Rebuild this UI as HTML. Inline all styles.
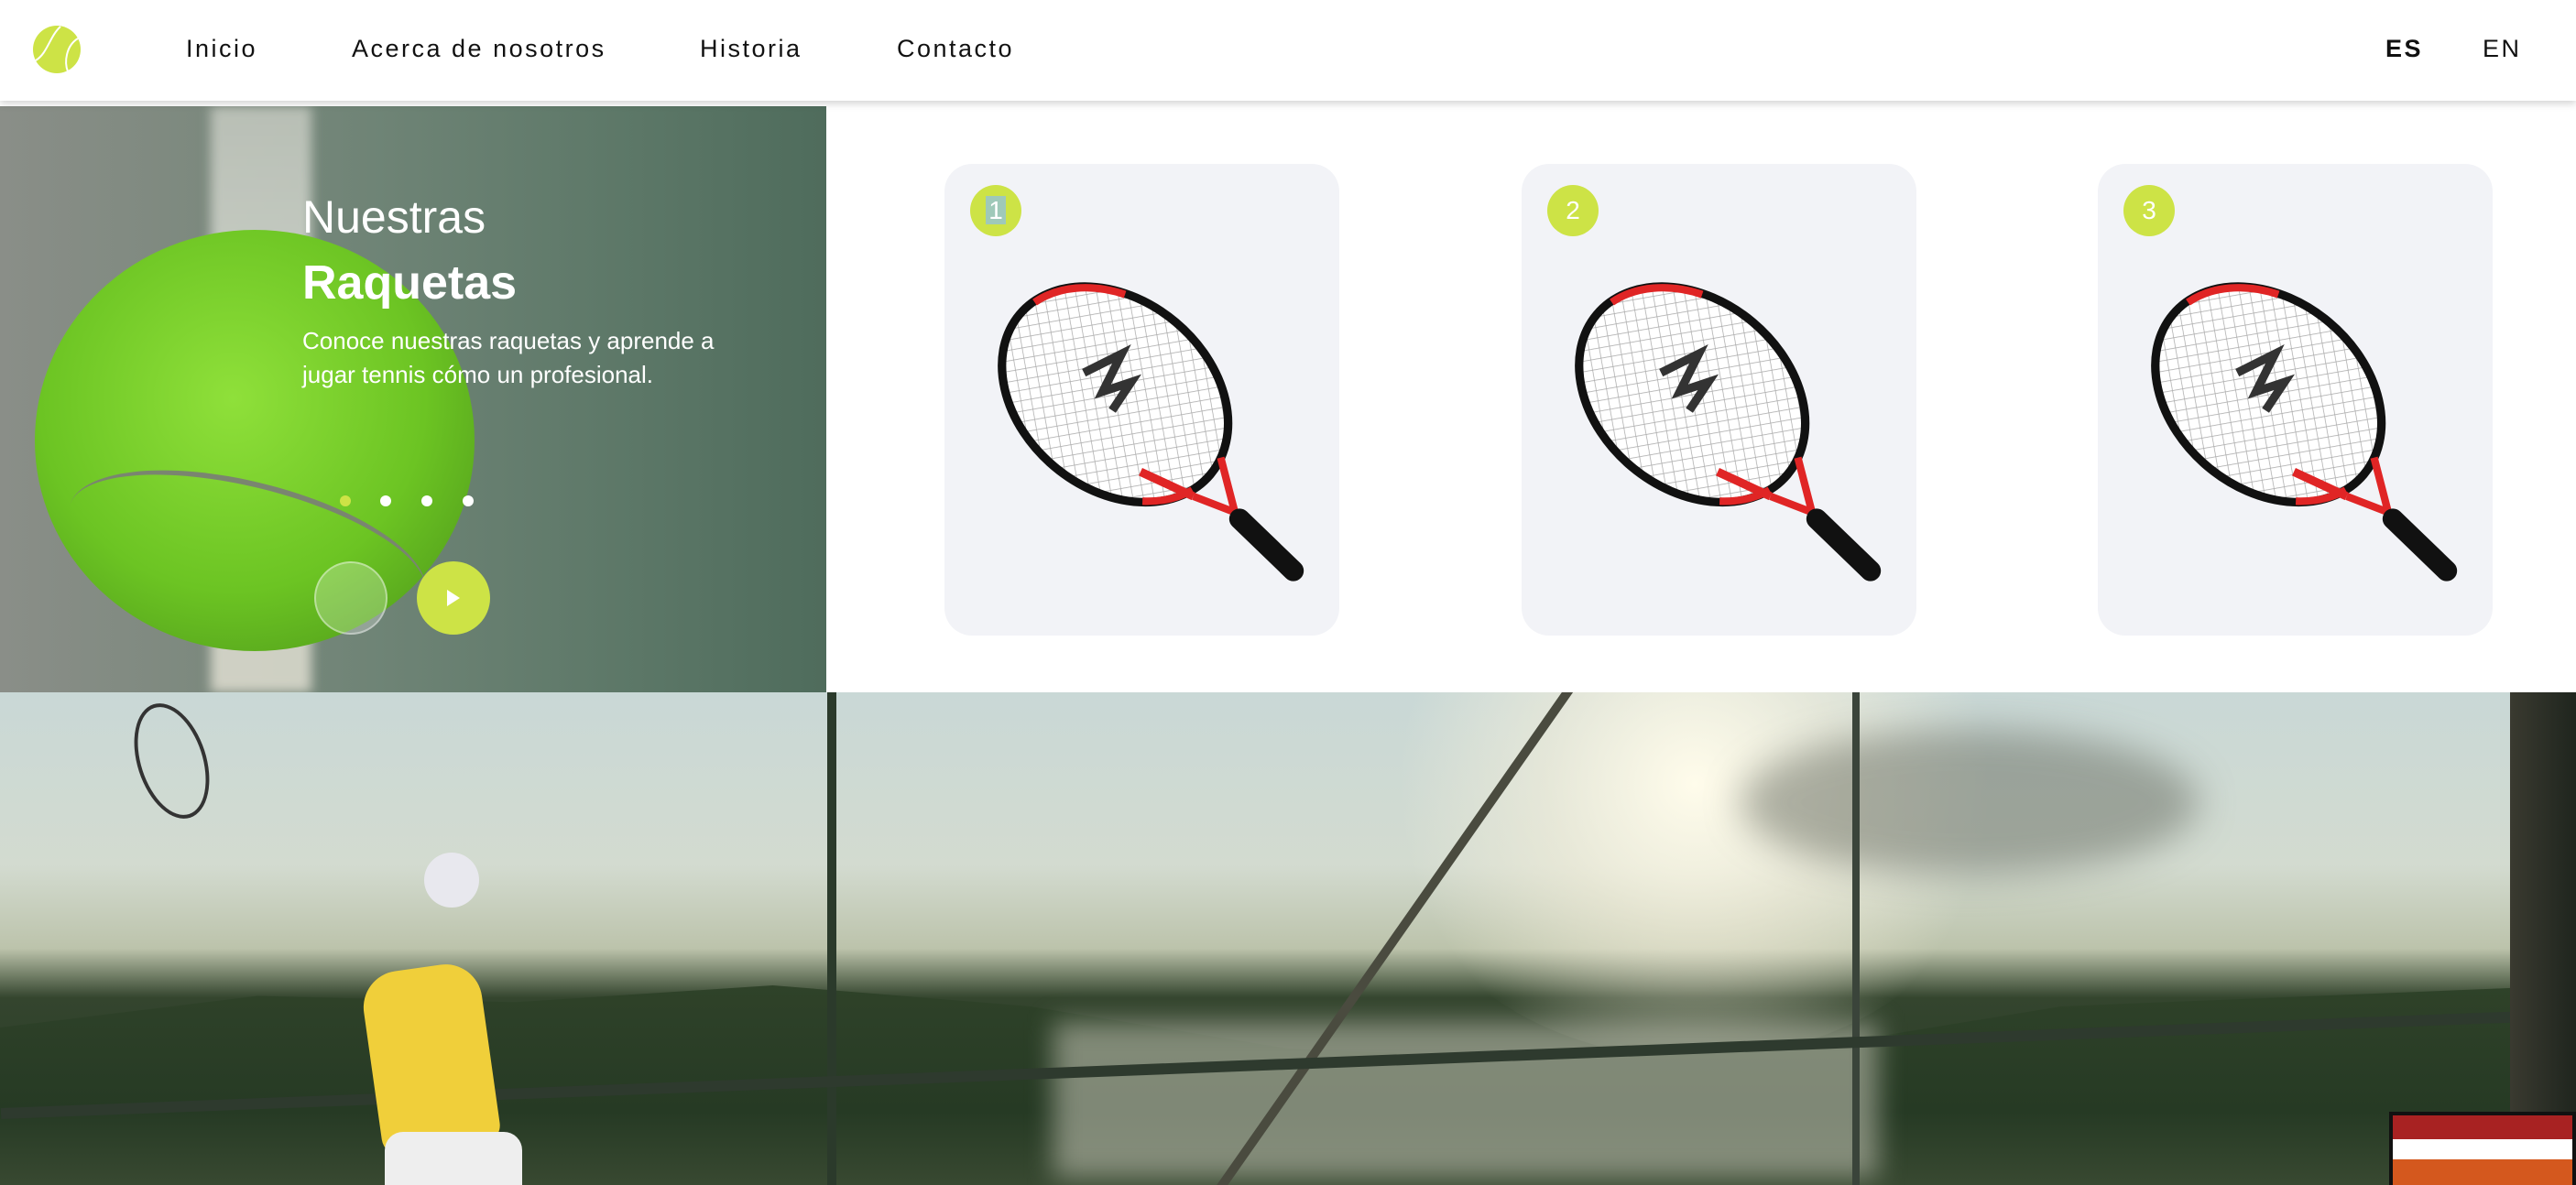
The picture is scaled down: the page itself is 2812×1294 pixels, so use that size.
<!DOCTYPE html>
<html><head><meta charset="utf-8">
<style>
*{margin:0;padding:0;box-sizing:border-box}
html,body{width:2812px;height:1294px;overflow:hidden;background:#fff;font-family:"Liberation Sans",Arial,sans-serif}
.nav{position:absolute;left:0;top:0;width:2812px;height:110px;background:#fff;box-shadow:0 3px 8px rgba(0,0,0,.18);z-index:5}
.nav a{position:absolute;top:38px;font-size:27px;letter-spacing:2.5px;color:#111;text-decoration:none}
.hero{position:absolute;left:0;top:116px;width:902px;height:640px;overflow:hidden;
background:linear-gradient(90deg,#8a8e88 0%,#7f8a80 20%,#6f8476 45%,#5d7868 75%,#4f6c5c 100%)}
.card{position:absolute;top:179px;width:431px;height:515px;background:#f2f3f7;border-radius:30px}
.badge{position:absolute;left:28px;top:23px;width:56px;height:56px;border-radius:50%;background:#cde346;color:#fff;font-size:28px;text-align:center;line-height:56px;z-index:2}
.bottom{position:absolute;left:0;top:756px;width:2812px;height:538px;overflow:hidden;
background:linear-gradient(180deg,#c9d8d6 0%,#d3dbd0 35%,#bcc3ab 52%,#34452e 62%,#2d3f2a 80%,#3a4a30 100%)}
</style></head><body>
<div class="nav">
<svg style="position:absolute;left:36px;top:28px" width="52" height="52" viewBox="0 0 52 52"><circle cx="26" cy="26" r="26" fill="#cde346"/><path d="M30 1 C18 12 16 30 3 38" stroke="#fff" stroke-width="2" fill="none"/><path d="M49 14 C36 22 34 40 38 50" stroke="#fff" stroke-width="2" fill="none"/></svg>
<a style="left:203px">Inicio</a>
<a style="left:384px">Acerca de nosotros</a>
<a style="left:764px">Historia</a>
<a style="left:979px">Contacto</a>
<a style="left:2604px;font-weight:bold">ES</a>
<a style="left:2710px">EN</a>
</div>

<div class="hero">
<div style="position:absolute;left:230px;top:0;width:110px;height:640px;background:linear-gradient(180deg,#c9cdc4,#dfe2da 40%,#e6e3d6);opacity:.8;filter:blur(6px)"></div>
<div style="position:absolute;left:38px;top:135px;width:480px;height:460px;border-radius:50%;background:radial-gradient(circle at 45% 40%,#8fe03a,#6cc423 55%,#4f9a1a 90%);"></div>
<div style="position:absolute;left:70px;top:410px;width:400px;height:150px;border-top:6px solid #7a8570;border-radius:50%;transform:rotate(14deg)"></div>
<div style="position:absolute;left:330px;top:92px;color:#fff;font-size:50px">Nuestras</div>
<div style="position:absolute;left:330px;top:163px;color:#fff;font-size:52px;font-weight:bold">Raquetas</div>
<div style="position:absolute;left:330px;top:238px;color:#fff;font-size:26px;line-height:37px;width:460px">Conoce nuestras raquetas y aprende a jugar tennis cómo un profesional.</div>
<div style="position:absolute;left:371px;top:425px;width:12px;height:12px;border-radius:50%;background:#cde346"></div>
<div style="position:absolute;left:415px;top:425px;width:12px;height:12px;border-radius:50%;background:#fff"></div>
<div style="position:absolute;left:460px;top:425px;width:12px;height:12px;border-radius:50%;background:#fff"></div>
<div style="position:absolute;left:505px;top:425px;width:12px;height:12px;border-radius:50%;background:#fff"></div>
<div style="position:absolute;left:343px;top:497px;width:80px;height:80px;border-radius:50%;background:rgba(255,255,255,.25);border:2px solid rgba(255,255,255,.4)"></div>
<div style="position:absolute;left:455px;top:497px;width:80px;height:80px;border-radius:50%;background:#cde346"></div>
<svg style="position:absolute;left:485px;top:527px" width="20" height="20"><path d="M3 1 L17 10 L3 19Z" fill="#fff"/></svg>
</div>

<svg width="0" height="0" style="position:absolute"><defs>
<pattern id="str" width="11" height="11" patternUnits="userSpaceOnUse" patternTransform="rotate(40)"><rect width="11" height="11" fill="#fff"/><path d="M0 0H11M0 0V11" stroke="#aaa" stroke-width="1.5"/></pattern>
<g id="rk">
<g transform="translate(8,22) scale(1.03)">
<g transform="translate(173,223) rotate(40)">
<ellipse cx="0" cy="0" rx="132" ry="100" fill="url(#str)" stroke="#111" stroke-width="9"/>
<path d="M-128 -20 A132 100 0 0 1 -60 -88" stroke="#e02525" stroke-width="8" fill="none"/>
<path d="M128 25 A132 100 0 0 1 95 68" stroke="#e02525" stroke-width="8" fill="none"/>
</g>
<path d="M140 200 l40 -20 l-20 40 l30 -10 l-20 30" stroke="#333" stroke-width="9" fill="none"/>
<path d="M200 305 L256 331" stroke="#e02525" stroke-width="9" fill="none"/>
<path d="M256 331 L300 348 L285 290" stroke="#e02525" stroke-width="8" fill="none"/>
<path d="M305 355 L362 410" stroke="#111" stroke-width="22" stroke-linecap="round"/>
</g>
</g></defs></svg>

<div class="card" style="left:1031px"><div class="badge"><span style="background:#9fc9b9;padding:0 3px">1</span></div><svg width="431" height="515" style="position:absolute;left:0;top:0"><use href="#rk"/></svg></div>
<div class="card" style="left:1661px"><div class="badge">2</div><svg width="431" height="515" style="position:absolute;left:0;top:0"><use href="#rk"/></svg></div>
<div class="card" style="left:2290px"><div class="badge">3</div><svg width="431" height="515" style="position:absolute;left:0;top:0"><use href="#rk"/></svg></div>

<div class="bottom">
<div style="position:absolute;left:1500px;top:-200px;width:700px;height:600px;border-radius:50%;background:radial-gradient(circle,rgba(255,252,235,1) 0%,rgba(245,240,220,.6) 35%,rgba(230,230,210,0) 70%)"></div>
<div style="position:absolute;left:1900px;top:40px;width:500px;height:160px;border-radius:50%;background:rgba(90,95,85,.45);filter:blur(20px)"></div>
<div style="position:absolute;left:0;top:320px;width:2812px;height:230px;background:linear-gradient(180deg,#2f4229,#263a24 60%,#3b4b33);clip-path:polygon(0 20%,10% 5%,20% 8%,30% 0,40% 10%,50% 30%,60% 35%,70% 30%,80% 10%,90% 5%,100% 0,100% 100%,0 100%)"></div>
<div style="position:absolute;left:1150px;top:360px;width:900px;height:170px;background:rgba(200,200,185,.55);filter:blur(14px)"></div>
<div style="position:absolute;left:903px;top:0;width:10px;height:538px;background:#2b3a2b"></div>
<div style="position:absolute;left:2022px;top:0;width:8px;height:538px;background:#3a443a"></div>
<div style="position:absolute;left:1720px;top:-20px;width:10px;height:720px;background:#4a4b3f;transform:rotate(35deg);transform-origin:top"></div>
<div style="position:absolute;left:0;top:400px;width:2812px;height:12px;background:#2e3a2e;transform:rotate(-2.2deg)"></div>
<div style="position:absolute;left:2740px;top:0;width:72px;height:538px;background:linear-gradient(90deg,#3a3a30,#1f251e)"></div>
<div style="position:absolute;left:405px;top:300px;width:130px;height:200px;background:#f0cf3a;border-radius:40px 40px 20px 20px;transform:rotate(-8deg)"></div>
<div style="position:absolute;left:420px;top:480px;width:150px;height:80px;background:#eee;border-radius:20px"></div>
<div style="position:absolute;left:463px;top:175px;width:60px;height:60px;border-radius:50%;background:#e8e8ee"></div>
<div style="position:absolute;left:150px;top:10px;width:75px;height:130px;border:4px solid #333;border-radius:50%;transform:rotate(-18deg)"></div>
<div style="position:absolute;left:2608px;top:458px;width:204px;height:80px;background:#f4f4f6;border:4px solid #111">
<div style="height:26px;background:#a82222"></div><div style="height:22px;background:#fff"></div><div style="height:30px;background:#d4581e"></div></div>
</div>
</body></html>
